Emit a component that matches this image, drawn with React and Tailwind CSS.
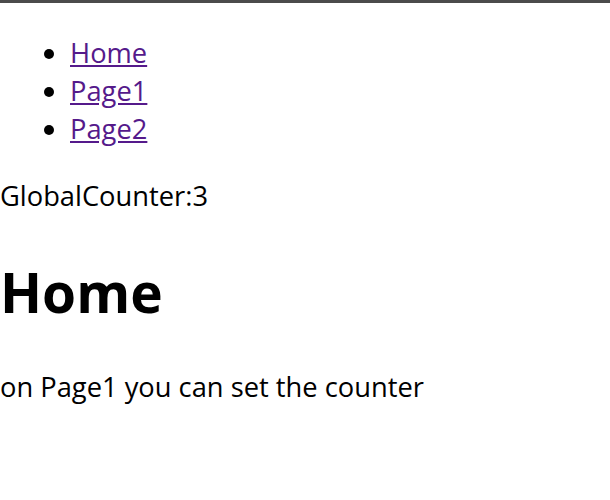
import React from 'react';

const App = () => {
  return (
    <div className="min-h-[500px] bg-white text-black font-['Segoe_UI','Open_Sans',sans-serif] text-[27.3px] leading-[38px]">
      <div className="h-[3px] bg-[#4b4b4b]" />
      <ul className="list-disc pl-[70px] mt-[31px]">
        <li><a href="#" className="text-[#551a8b] underline">Home</a></li>
        <li><a href="#" className="text-[#551a8b] underline">Page1</a></li>
        <li><a href="#" className="text-[#551a8b] underline">Page2</a></li>
      </ul>
      <p className="mt-[29px]">GlobalCounter:3</p>
      <h1 className="mt-[39px] text-[55px] font-bold leading-[75px]">Home</h1>
      <p className="mt-[39px]">on Page1 you can set the counter</p>
    </div>
  );
};

export default App;
